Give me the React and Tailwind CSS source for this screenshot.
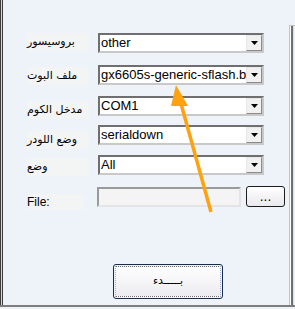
const rows = [
  { label: "بروسيسور", value: "other", mt: "mt-[33px]", lt: "mt-[0px]" },
  { label: "ملف البوت", value: "gx6605s-generic-sflash.boot", mt: "mt-[12px]", lt: "mt-[2px]" },
  { label: "مدخل الكوم", value: "COM1", mt: "mt-[11px]", lt: "mt-[5px]" },
  { label: "وضع اللودر", value: "serialdown", mt: "mt-[9px]", lt: "mt-[6px]" },
  { label: "وضع", value: "All", mt: "mt-[10px]", lt: "mt-[3px]" },
];

function Combo({ value }) {
  return (
    <div className="w-[166px] h-[20px] flex border-2 border-t-[#6f6f6f] border-l-[#6f6f6f] border-b-[#c9c9c9] border-r-[#c9c9c9] bg-white">
      <div
        className="flex-1 overflow-hidden whitespace-nowrap pl-[1px] text-[13px] leading-[16px] text-black"
        style={{ fontFamily: '"Liberation Sans", sans-serif' }}
      >
        {value}
      </div>
      <div className="w-[16px] h-[16px] flex items-center justify-center bg-[#f1f1f1] border border-t-[#e8e8e8] border-l-[#e8e8e8] border-b-[#8a8a8a] border-r-[#8a8a8a]">
        <svg width="7" height="4" viewBox="0 0 7 4">
          <path d="M0 0h7L3.5 4z" fill="#000" />
        </svg>
      </div>
    </div>
  );
}

export default function App() {
  return (
    <div
      className="w-[295px] h-[309px] relative flex flex-col bg-[#eef3fa] overflow-hidden"
      style={{ fontFamily: '"DejaVu Sans", "Liberation Sans", sans-serif' }}
    >
      <div className="flex flex-1">
        <div className="w-px bg-[#3c3c3c]" />
        <div className="w-px bg-[#d8d8d8]" />
        <div className="w-px bg-[#3c3c3c]" />
        <div className="flex-1 flex flex-col">
          {rows.map((r) => (
            <div key={r.label} className={`flex items-start h-[20px] ${r.mt}`}>
              <div
                dir="rtl"
                className={`ml-[24px] w-[62px] h-[18px] bg-[#f3f4f4] text-[11px] leading-[18px] text-black text-left ${r.lt}`}
              >
                <span>{r.label}</span>
              </div>
              <div className="ml-[9px]">
                <Combo value={r.value} />
              </div>
            </div>
          ))}
          <div className="flex items-start h-[21px] mt-[11px]">
            <div
              className="ml-[24px] w-[57px] h-[16px] mt-[8px] bg-[#f3f4f4] text-[12px] leading-[16px] text-black"
              style={{ fontFamily: '"Liberation Sans", sans-serif' }}
            >
              File:
            </div>
            <div className="ml-[13px] w-[144px] h-[20px] mt-[1px] bg-[#f4f4f4] border-2 border-t-[#9a9a9a] border-l-[#9a9a9a] border-b-[#e4e4e4] border-r-[#e4e4e4]" />
            <div className="ml-[5px] w-[39px] h-[21px] rounded-[3px] border border-[#1c1c1c] bg-gradient-to-b from-white to-[#e9e9ee] flex items-center justify-center text-[12px] leading-none text-black">
              ...
            </div>
          </div>
          <div className="flex mt-[57px] ml-[110px]">
            <div className="w-[110px] h-[35px] rounded-[3px] border border-[#1a2c4a] p-[1px]">
              <div className="w-full h-full border border-dotted border-[#6b6b6b] border-l-[#8fb3f0] border-r-[#8fb3f0] bg-gradient-to-b from-white to-[#ecebf0] flex items-center justify-center text-[11px] text-black">
                <span dir="rtl">بـــــدء</span>
              </div>
            </div>
          </div>
        </div>
        <div className="mt-[25px] w-[6px] flex border-l border-t border-[#c4c4c4] border-b-0">
          <div className="w-px bg-white" />
          <div className="w-[2px] bg-[#707070]" />
          <div className="w-px bg-[#e0e0e0]" />
        </div>
      </div>
      <div className="h-[2px] bg-[#7d7d7d] mb-[2px]" />
      <svg className="absolute left-0 top-0 pointer-events-none" width="295" height="309">
        <line x1="211" y1="212" x2="180" y2="100" stroke="#ffa20f" strokeWidth="3.5" />
        <path d="M176 85 L188 106 L171 106 Z" fill="#ffa20f" />
      </svg>
    </div>
  );
}
